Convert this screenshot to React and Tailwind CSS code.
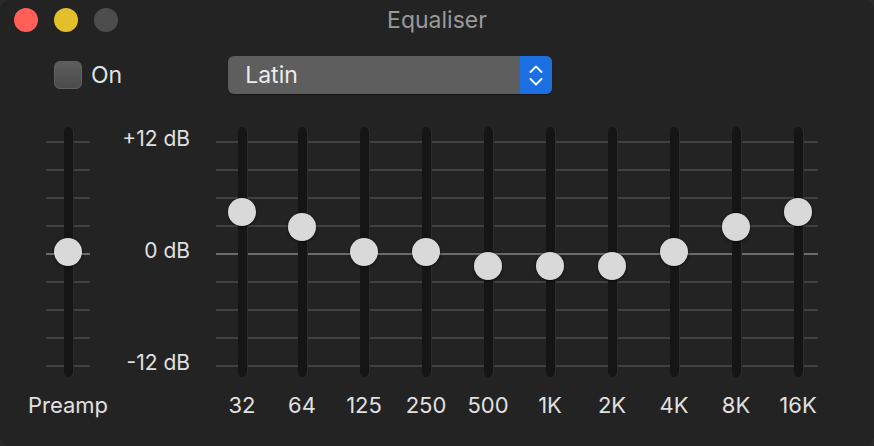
import React from 'react';

const font = { fontFamily: 'Inter, "Liberation Sans", sans-serif' };

// knob top offset inside the 250px slider area
const bands = [
  { label: '32', top: 71 },
  { label: '64', top: 86 },
  { label: '125', top: 111 },
  { label: '250', top: 111 },
  { label: '500', top: 125 },
  { label: '1K', top: 125 },
  { label: '2K', top: 125 },
  { label: '4K', top: 111 },
  { label: '8K', top: 86 },
  { label: '16K', top: 71 },
];

function GridLines() {
  return (
    <div className="flex flex-col gap-[26px]">
      {Array.from({ length: 9 }).map((_, i) => (
        <div key={i} className={`h-[2px] ${i === 4 ? 'bg-[#6a6a6a]' : 'bg-[#414141]'}`} />
      ))}
    </div>
  );
}

function Slider({ top }) {
  return (
    <div className="relative flex h-[250px] w-[28px] justify-center">
      <div className="h-full w-[9px] rounded-full bg-[#151515] shadow-[1px_0_0_#2c2c2c]" />
      <div
        className="absolute left-0 h-[28px] w-[28px] rounded-full bg-[#d9d9d9] shadow-[0_1px_3px_rgba(0,0,0,0.6)]"
        style={{ top }}
      />
    </div>
  );
}

function Label({ children }) {
  return (
    <div className="mt-[15px] h-[26px] whitespace-nowrap text-[22px] leading-[26px] text-[#e0e0e0]">
      {children}
    </div>
  );
}

export default function App() {
  return (
    <div className="h-[446px] w-[874px] bg-[#2a2a2a]" style={font}>
      <div className="h-full w-full overflow-hidden rounded-[10px] bg-[#232323]">
        {/* title bar */}
        <div className="flex h-[40px] items-center">
          <div className="flex w-[140px] items-center gap-[16px] pl-[14px]">
            <span className="h-[24px] w-[24px] rounded-full bg-[#fe5f57]" />
            <span className="h-[24px] w-[24px] rounded-full bg-[#e4bf2c]" />
            <span className="h-[24px] w-[24px] rounded-full bg-[#4d4d4d]" />
          </div>
          <div className="flex-1 text-center text-[23px] text-[#9a9a9a]">Equaliser</div>
          <div className="w-[140px]" />
        </div>

        {/* controls */}
        <div className="mt-[16px] flex h-[38px] items-center pl-[54px]">
          <div className="h-[28px] w-[28px] rounded-[6px] border border-[#5f5f5f] bg-gradient-to-b from-[#5e5e5e] to-[#4b4b4b]" />
          <span className="ml-[9px] text-[23px] text-[#e2e2e2]">On</span>
          <div className="ml-[106px] flex h-[38px] w-[324px] overflow-hidden rounded-[6px] bg-[#5e5e5e] shadow-[0_1px_1px_rgba(0,0,0,0.4)]">
            <div className="flex flex-1 items-center pl-[17px] text-[23px] text-[#ececec]">Latin</div>
            <div className="flex w-[32px] flex-col items-center justify-center gap-[5px] bg-[#1b6fe0]">
              <svg width="14" height="8" viewBox="0 0 14 8" fill="none">
                <path d="M1.5 7L7 1.5L12.5 7" stroke="#eaf1ff" strokeWidth="2" strokeLinecap="round" strokeLinejoin="round" />
              </svg>
              <svg width="14" height="8" viewBox="0 0 14 8" fill="none">
                <path d="M1.5 1L7 6.5L12.5 1" stroke="#eaf1ff" strokeWidth="2" strokeLinecap="round" strokeLinejoin="round" />
              </svg>
            </div>
          </div>
        </div>

        {/* sliders */}
        <div className="mt-[33px] flex">
          {/* preamp */}
          <div className="ml-[46px] flex w-[44px] flex-col items-center">
            <div className="relative h-[250px] w-[44px]">
              <div className="absolute inset-x-0 top-[14px]">
                <GridLines />
              </div>
              <div className="relative flex justify-center">
                <Slider top={111} />
              </div>
            </div>
            <Label>Preamp</Label>
          </div>

          {/* dB scale */}
          <div className="flex h-[250px] w-[100px] flex-col justify-between pb-[2px] text-right text-[21px] leading-[24px] text-[#e0e0e0]">
            <div>+12 dB</div>
            <div>0 dB</div>
            <div>-12 dB</div>
          </div>

          {/* bands */}
          <div className="relative ml-[19px] flex w-[620px]">
            <div className="absolute left-[7px] right-[11px] top-[14px]">
              <GridLines />
            </div>
            {bands.map((b, i) => (
              <div
                key={b.label}
                className={`relative flex w-[62px] flex-col items-center ${i === 0 ? 'pl-[4px]' : ''}`}
              >
                <Slider top={b.top} />
                <Label>{b.label}</Label>
              </div>
            ))}
          </div>
        </div>
      </div>
    </div>
  );
}
